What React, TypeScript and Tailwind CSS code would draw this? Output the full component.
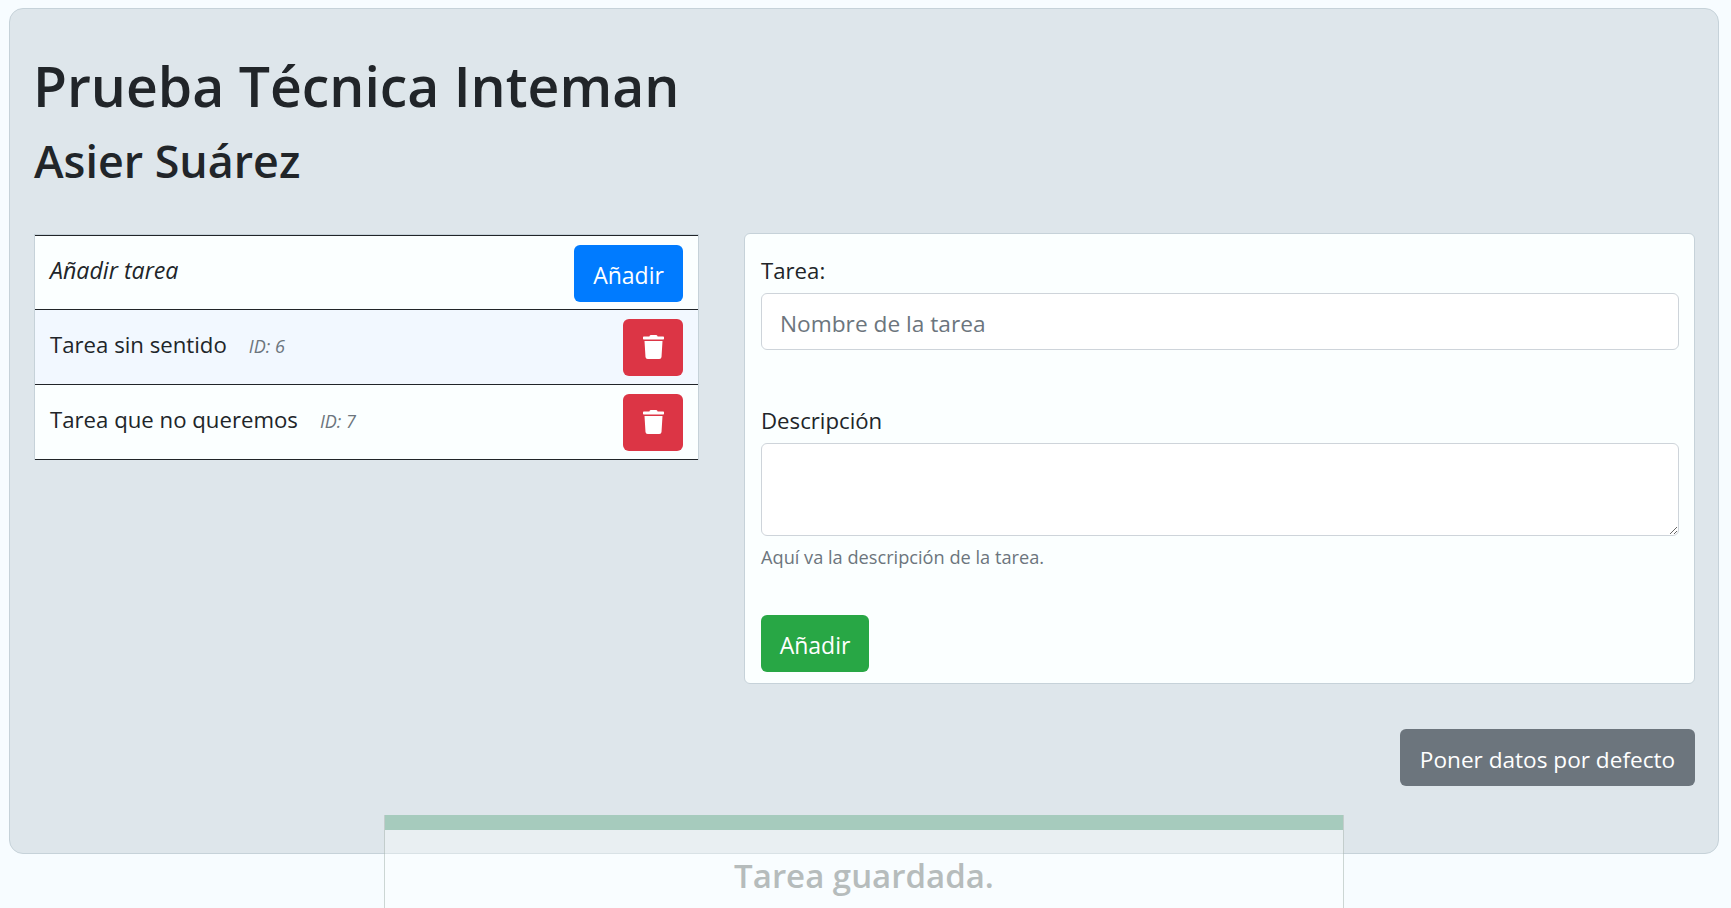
const font = "font-['Open_Sans',sans-serif]";

function TrashIcon() {
  return (
    <svg viewBox="0 0 448 512" className="h-[24px] w-[21px] fill-white">
      <path d="M432 32H312l-9.4-18.7A24 24 0 0 0 281.1 0H166.8a23.7 23.7 0 0 0-21.4 13.3L136 32H16A16 16 0 0 0 0 48v32a16 16 0 0 0 16 16h416a16 16 0 0 0 16-16V48a16 16 0 0 0-16-16zM53.2 467a48 48 0 0 0 47.9 45h245.8a48 48 0 0 0 47.9-45L416 128H32z" />
    </svg>
  );
}

function TaskRow({ name, id, shaded }: { name: string; id: number; shaded?: boolean }) {
  return (
    <li
      className={`flex h-[75px] items-center justify-between border-b border-[#212529] pl-[15px] pr-[15px] ${
        shaded ? "bg-[#f2f8ff]" : "bg-[#fbffff]"
      }`}
    >
      <div className="mt-[-5px] flex items-baseline">
        <span className="text-[22.2px] text-[#212529]">{name}</span>
        <small className="ml-[22px] text-[18px] italic text-[#6c757d]">ID: {id}</small>
      </div>
      <button className="flex h-[57px] w-[60px] items-center justify-center rounded-[6px] bg-[#dc3545]">
        <TrashIcon />
      </button>
    </li>
  );
}

export default function App() {
  return (
    <div className={`relative h-[908px] overflow-hidden bg-[#f7fcff] px-[9px] pt-[8px] ${font}`}>
      <div className="h-[846px] w-[1710px] rounded-[14px] border border-[#c6d2d9] bg-[#dee6eb] pl-[24px] pr-[23px] pt-[41px]">
        <h1 className="ml-[-1px] text-[55.3px] leading-[72px] font-semibold text-[#212529]">Prueba Técnica Inteman</h1>
        <h2 className="mt-[10px] text-[44.8px] leading-[58px] font-semibold text-[#212529]">Asier Suárez</h2>

        <div className="mt-[42px] flex items-start gap-[45px]">
          <ul className="mt-[2px] w-[665px] shrink-0 border-x border-t border-[#c6d2d9]">
            <li className="flex h-[75px] items-center justify-between border-y border-y-[#212529] bg-[#fbffff] pl-[15px] pr-[15px]">
              <span className="mb-[4px] text-[23.2px] italic text-[#212529]">Añadir tarea</span>
              <button className="mt-[2px] h-[57px] w-[109px] rounded-[6px] bg-[#007bff] pt-[3px] text-[23px] text-white">Añadir</button>
            </li>
            <TaskRow name="Tarea sin sentido" id={6} shaded />
            <TaskRow name="Tarea que no queremos" id={7} />
          </ul>

          <form className="mt-[1px] flex h-[451px] w-[951px] shrink-0 flex-col rounded-[6px] border border-[#c6d2d9] bg-[#fbffff] pl-[16px] pr-[15px] pt-[22px]">
            <label className="text-[22.2px] leading-[30px] text-[#212529]">Tarea:</label>
            <input
              placeholder="Nombre de la tarea"
              className="mt-[7px] h-[57px] rounded-[6px] border border-[#ced4da] bg-white px-[18px] pt-[4px] text-[22.7px] placeholder:text-[#6c757d]"
            />
            <label className="mt-[56px] text-[22.2px] leading-[30px] text-[#212529]">Descripción</label>
            <textarea className="mt-[7px] h-[93px] rounded-[6px] border border-[#ced4da] bg-white" />
            <small className="mt-[8px] text-[18.2px] leading-[26px] text-[#6c757d]">Aquí va la descripción de la tarea.</small>
            <button className="mt-[45px] h-[57px] w-[108px] rounded-[6px] bg-[#28a745] pt-[3px] text-[23px] text-white">Añadir</button>
          </form>
        </div>

        <div className="mt-[45px] flex justify-end">
          <button className="h-[57px] w-[295px] rounded-[6px] bg-[#6c757d] pt-[4px] text-[22.6px] text-white">Poner datos por defecto</button>
        </div>
      </div>

      {/* toast, fading in over the page */}
      <div className="absolute left-[384px] top-[815px] h-[120px] w-[960px] border-x border-[#8a9a94]/40 bg-[#fdffff]/35">
        <div className="h-[15px] bg-[#a6cbbd]" />
        <p className="mt-[26px] text-center text-[33px] leading-[40px] font-semibold text-[#b6bcbc]">Tarea guardada.</p>
      </div>
    </div>
  );
}
